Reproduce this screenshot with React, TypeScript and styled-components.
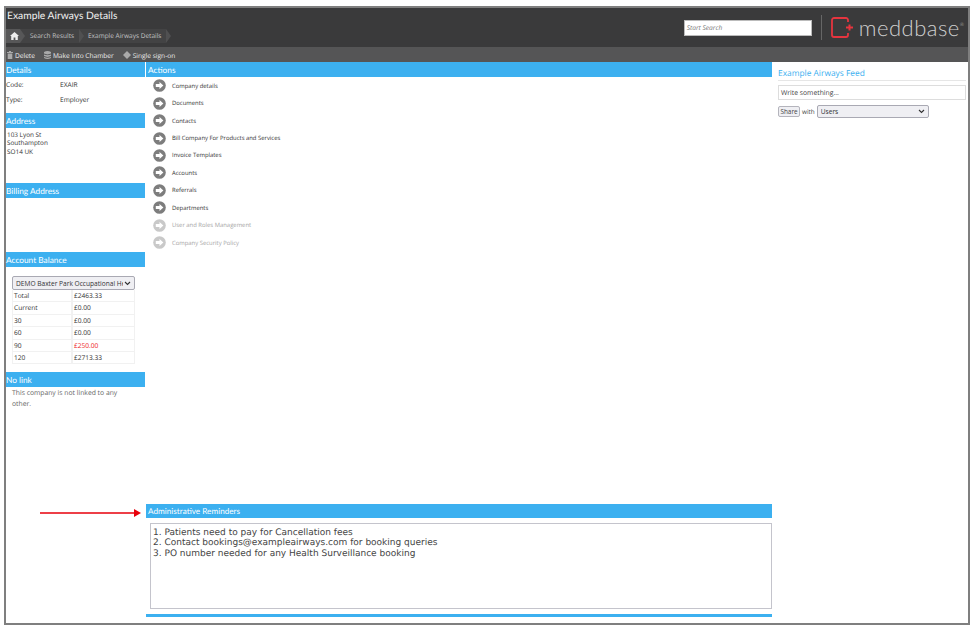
import React from "react";
import styled, { createGlobalStyle } from "styled-components";

const chevron =
  "url(\"data:image/svg+xml,%3Csvg xmlns='http://www.w3.org/2000/svg' width='7' height='5' fill='none' stroke='%23333' stroke-width='1.1'%3E%3Cpath d='M1 1l2.5 2.5L6 1'/%3E%3C/svg%3E\")";

const Global = createGlobalStyle`
  html, body { margin: 0; padding: 0; background: #fff; }
  body {
    font-family: "Open Sans", "Noto Sans", sans-serif;
    text-rendering: geometricPrecision;
    width: 975px;
    height: 632px;
    overflow: hidden;
  }
`;

const Frame = styled.div`
  position: relative;
  box-sizing: border-box;
  width: 966px;
  height: 619px;
  margin: 6px 0 0 4px;
  border: 2px solid #7f7f7f;
  display: flex;
  flex-direction: column;
`;
const Header = styled.header`
  height: 39px;
  flex: none;
  background: #3a3a3b;
  display: flex;
  justify-content: space-between;
`;
const TitleArea = styled.div`
  display: flex;
  flex-direction: column;
`;
const Title = styled.h1`
  margin: 1.5px 0 0 1px;
  font-family: Lato, "Open Sans", sans-serif;
  font-size: 10.3px;
  line-height: 13px;
  font-weight: 400;
  color: #f0f0f0;
`;
const Crumbs = styled.nav`
  display: flex;
  align-items: center;
  margin-top: 6.5px;
  height: 14px;
  width: 160px;
  background: #434344;
  font-size: 6.5px;
  color: #c4c4c4;
`;
const HomeCrumb = styled.span`
  position: relative;
  width: 14px;
  height: 14px;
  padding-left: 4px;
  box-sizing: border-box;
  display: flex;
  align-items: center;
  background: #575758;
  &::after {
    content: "";
    position: absolute;
    left: 14px;
    top: 0;
    border-top: 7px solid transparent;
    border-bottom: 7px solid transparent;
    border-left: 5px solid #575758;
  }
`;
const Crumb = styled.span<{ $gap: number; $width: number }>`
  position: relative;
  height: 14px;
  line-height: 14px;
  margin-left: ${(p) => p.$gap}px;
  width: ${(p) => p.$width}px;
  flex: none;
  &::after {
    content: "";
    position: absolute;
    right: -5px;
    top: 0;
    border-top: 7px solid transparent;
    border-bottom: 7px solid transparent;
    border-left: 5px solid #505051;
  }
`;
const Brand = styled.div`
  display: flex;
  align-items: center;
  padding-right: 4px;
`;
const Search = styled.div`
  box-sizing: border-box;
  width: 128px;
  height: 16px;
  background: #fff;
  border: 1px solid #bbb;
  font-size: 6.6px;
  font-style: italic;
  line-height: 14px;
  padding-left: 2px;
  color: #777;
`;
const Divider = styled.div`
  width: 1px;
  height: 25px;
  background: #666;
  margin: 0 9px 0 9px;
`;
const LogoText = styled.span`
  font-family: Lato, "Open Sans", sans-serif;
  font-size: 22px;
  font-weight: 300;
  line-height: 25px;
  letter-spacing: 0.5px;
  color: #d0d0d0;
  margin-left: 5px;
`;
const Registered = styled.sup`
  font-size: 5px;
  line-height: 5px;
  vertical-align: 10px;
  letter-spacing: 0;
`;
const Toolbar = styled.div`
  box-sizing: border-box;
  height: 15px;
  flex: none;
  padding: 1px 0 0 1px;
  background: #555556;
  display: flex;
  align-items: center;
  font-size: 6.6px;
  color: #eee;
`;
const ToolItem = styled.span`
  display: flex;
  align-items: center;
  gap: 2px;
  margin-right: 9px;
  svg { display: block; }
`;
const Body = styled.main`
  flex: 1;
  display: grid;
  grid-template-columns: 139px 626px 1fr;
  column-gap: 1px;
  min-height: 0;
`;
const Side = styled.aside`
  display: flex;
  flex-direction: column;
`;
const SectionBar = styled.div<{ $inset?: number }>`
  height: 15px;
  padding-left: ${(p) => p.$inset ?? 0}px;
  background: #3cb0f0;
  color: #fff;
  font-family: Lato, "Open Sans", sans-serif;
  font-size: 8.3px;
  line-height: 16px;
  flex: none;
`;
const InfoRows = styled.div`
  box-sizing: border-box;
  height: 36px;
  padding-top: 1px;
`;
const InfoRow = styled.div`
  display: grid;
  grid-template-columns: 54px 1fr;
  height: 15px;
  font-size: 6.6px;
  line-height: 14px;
  color: #333;
`;
const Address = styled.div`
  box-sizing: border-box;
  height: 55px;
  padding: 3px 0 0 1px;
  font-size: 6.4px;
  line-height: 8.4px;
  color: #333;
`;
const Blank = styled.div`
  height: 54px;
`;
const Balance = styled.div`
  box-sizing: border-box;
  height: 105px;
  padding: 9px 10px 0 6px;
`;
const NativeSelect = styled.select<{ $h: number }>`
  box-sizing: border-box;
  display: block;
  appearance: none;
  width: 100%;
  height: ${(p) => p.$h}px;
  background: #efeff3 ${chevron} no-repeat right 3px center;
  border: 1px solid #a9a9b3;
  border-radius: 2px;
  padding: 0 11px 0 3px;
  font-family: "Open Sans", "Noto Sans", sans-serif;
  font-size: 6.6px;
  color: #333;
`;
const Table = styled.div`
  display: grid;
  grid-template-columns: 60px 1fr;
  font-size: 6.6px;
`;
const Cell = styled.div<{ $red?: boolean }>`
  height: 12.4px;
  box-sizing: border-box;
  line-height: 11.4px;
  padding-left: 1px;
  border: 1px solid #f1f1f1;
  border-top: 0;
  color: ${(p) => (p.$red ? "#ee1c25" : "#333")};
`;
const NoLink = styled.p`
  margin: 0;
  padding: 0 8px 0 6px;
  font-size: 6.8px;
  line-height: 11.3px;
  color: #666;
`;
const Middle = styled.section`
  display: flex;
  flex-direction: column;
`;
const ActionList = styled.ul`
  list-style: none;
  margin: 0;
  padding: 0 0 0 7px;
`;
const ActionItem = styled.li<{ $off?: boolean }>`
  height: 17.45px;
  display: flex;
  align-items: center;
  gap: 6px;
  font-size: 5.9px;
  color: ${(p) => (p.$off ? "#a5a5a5" : "#333")};
`;
const Reminders = styled.div`
  margin-top: auto;
  display: flex;
  flex-direction: column;
`;
const ReminderBar = styled(SectionBar)`
  height: 14px;
  line-height: 14px;
  font-size: 8.2px;
`;
const NoteBox = styled.div`
  box-sizing: border-box;
  height: 85.5px;
  margin: 5px 0 5.5px 4px;
  border: 1px solid #c4c4cc;
  padding: 3.5px 2px 0;
  font-family: "DejaVu Sans", Verdana, sans-serif;
  font-size: 9px;
  line-height: 10.7px;
  color: #444;
  white-space: pre-line;
`;
const BottomRule = styled.div`
  height: 3px;
  background: #3cb0f0;
  margin-bottom: 6px;
`;
const Feed = styled.section`
  padding: 5px 2px 0 5px;
`;
const FeedTitle = styled.h2`
  margin: 0;
  height: 13px;
  font-size: 8.4px;
  line-height: 14px;
  font-weight: 400;
  color: #3cb0f0;
  border-bottom: 1px solid #e6e6e6;
`;
const WriteBox = styled.div`
  box-sizing: border-box;
  height: 15px;
  margin-top: 4px;
  border: 1px solid #ddd;
  padding-left: 2px;
  font-size: 6.8px;
  line-height: 13px;
  color: #444;
`;
const ShareRow = styled.div`
  display: flex;
  align-items: center;
  gap: 2px;
  margin-top: 4.5px;
  font-size: 6.4px;
  color: #444;
`;
const ShareButton = styled.button`
  box-sizing: border-box;
  width: 22px;
  height: 11px;
  padding: 0;
  font-family: "Open Sans", "Noto Sans", sans-serif;
  font-size: 6.4px;
  line-height: 9px;
  color: #444;
  background: #efeff3;
  border: 1px solid #b4b4bc;
  border-radius: 2px;
`;
const UsersSelect = styled(NativeSelect)`
  width: 112px;
`;
const Pointer = styled.svg`
  position: absolute;
  left: 34px;
  top: 500px;
`;

const ArrowIcon = ({ off }: { off?: boolean }) => {
  const c = off ? "#c9c9c9" : "#7d7d7d";
  return (
    <svg width="13" height="13" viewBox="0 0 13 13">
      <circle cx="6.5" cy="6.5" r="6.3" fill={c} />
      <path d="M2.8 5.1h3.7V2.9l3.9 3.6-3.9 3.6V7.9H2.8z" fill="#fff" />
    </svg>
  );
};

const HomeIcon = () => (
  <svg width="9" height="8" viewBox="0 0 9 8" fill="#eee">
    <path d="M4.5 0L9 4H7.8v4H5.4V5.4H3.6V8H1.2V4H0z" />
  </svg>
);

const Logo = () => (
  <svg width="23" height="21" viewBox="0 0 23 21" fill="none" stroke="#e5353f" strokeWidth="1.8">
    <path d="M17 5V3a2 2 0 0 0-2-2H3a2 2 0 0 0-2 2v15a2 2 0 0 0 2 2h12a2 2 0 0 0 2-2v-2" />
    <path d="M15 10.5h7M18.5 7.5v6" strokeWidth="2" />
  </svg>
);

const actions = [
  "Company details",
  "Documents",
  "Contacts",
  "Bill Company For Products and Services",
  "Invoice Templates",
  "Accounts",
  "Referrals",
  "Departments",
];
const disabled = ["User and Roles Management", "Company Security Policy"];
const balances: [string, string, boolean?][] = [
  ["Total", "£2463.33"],
  ["Current", "£0.00"],
  ["30", "£0.00"],
  ["60", "£0.00"],
  ["90", "£250.00", true],
  ["120", "£2713.33"],
];

export default function App() {
  return (
    <>
      <Global />
      <Frame>
        <Header>
          <TitleArea>
            <Title>Example Airways Details</Title>
            <Crumbs>
              <HomeCrumb><HomeIcon /></HomeCrumb>
              <Crumb $gap={10} $width={49}>Search Results</Crumb>
              <Crumb $gap={9} $width={78}>Example Airways Details</Crumb>
            </Crumbs>
          </TitleArea>
          <Brand>
            <Search>Start Search</Search>
            <Divider />
            <Logo />
            <LogoText>meddbase<Registered>®</Registered></LogoText>
          </Brand>
        </Header>
        <Toolbar>
          <ToolItem>
            <svg width="6" height="8" viewBox="0 0 6 8" fill="#aaa"><path d="M0 1h6v1H0zM2 0h2v1H2zM.7 2.4h4.6V8H.7z" /></svg>
            Delete
          </ToolItem>
          <ToolItem>
            <svg width="7" height="8" viewBox="0 0 7 8" fill="#aaa"><path d="M0 1q3.5-2 7 0v1.6q-3.5 1.6-7 0zM0 3.4q3.5 1.6 7 0v1.7q-3.5 1.6-7 0zM0 5.9q3.5 1.6 7 0V7q-3.5 2-7 0z" /></svg>
            Make Into Chamber
          </ToolItem>
          <ToolItem>
            <svg width="8" height="8" viewBox="0 0 8 8" fill="#aaa"><path d="M4 0L8 4 4 8 0 4z" /></svg>
            Single sign-on
          </ToolItem>
        </Toolbar>
        <Body>
          <Side>
            <SectionBar>Details</SectionBar>
            <InfoRows>
              <InfoRow><span>Code:</span><span>EXAIR</span></InfoRow>
              <InfoRow><span>Type:</span><span>Employer</span></InfoRow>
            </InfoRows>
            <SectionBar>Address</SectionBar>
            <Address>103 Lyon St<br />Southampton<br />SO14 UK</Address>
            <SectionBar>Billing Address</SectionBar>
            <Blank />
            <SectionBar>Account Balance</SectionBar>
            <Balance>
              <NativeSelect $h={14} defaultValue="demo">
                <option value="demo">DEMO Baxter Park Occupational Health</option>
              </NativeSelect>
              <Table>
                {balances.map(([label, value, red]) => (
                  <React.Fragment key={label}>
                    <Cell>{label}</Cell>
                    <Cell $red={red}>{value}</Cell>
                  </React.Fragment>
                ))}
              </Table>
            </Balance>
            <SectionBar>No link</SectionBar>
            <NoLink>This company is not linked to any other.</NoLink>
          </Side>
          <Middle>
            <SectionBar $inset={2}>Actions</SectionBar>
            <ActionList>
              {actions.map((a) => (
                <ActionItem key={a}><ArrowIcon />{a}</ActionItem>
              ))}
              {disabled.map((a) => (
                <ActionItem key={a} $off><ArrowIcon off />{a}</ActionItem>
              ))}
            </ActionList>
            <Reminders>
              <ReminderBar $inset={2}>Administrative Reminders</ReminderBar>
              <NoteBox>
                {"1. Patients need to pay for Cancellation fees\n2. Contact bookings@exampleairways.com for booking queries\n3. PO number needed for any Health Surveillance booking"}
              </NoteBox>
              <BottomRule />
            </Reminders>
          </Middle>
          <Feed>
            <FeedTitle>Example Airways Feed</FeedTitle>
            <WriteBox>Write something...</WriteBox>
            <ShareRow>
              <ShareButton>Share</ShareButton>
              <span>with</span>
              <UsersSelect $h={13} defaultValue="users">
                <option value="users">Users</option>
              </UsersSelect>
            </ShareRow>
          </Feed>
        </Body>
        <Pointer width="102" height="10" viewBox="0 0 102 10">
          <path d="M0 4.2h94V1l7 4-7 4V5.8H0z" fill="#e8000b" />
        </Pointer>
      </Frame>
    </>
  );
}
